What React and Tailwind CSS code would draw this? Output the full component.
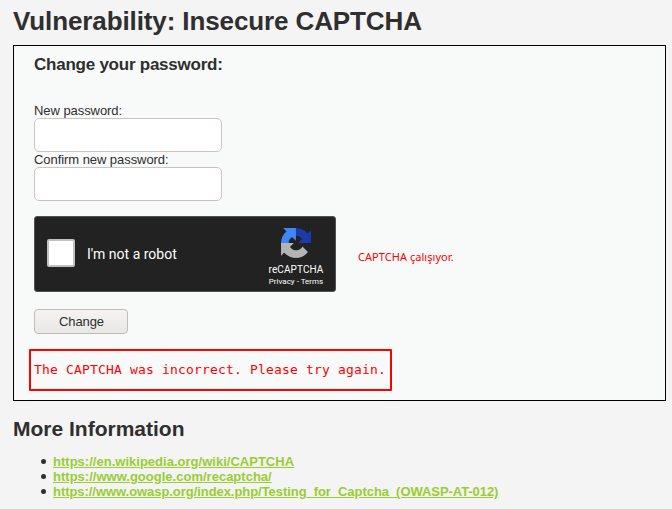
const links = [
  { href: 'https://en.wikipedia.org/wiki/CAPTCHA', tracking: 'tracking-[0.015px]' },
  { href: 'https://www.google.com/recaptcha/', tracking: 'tracking-[0.01px]' },
  {
    href: 'https://www.owasp.org/index.php/Testing_for_Captcha_(OWASP-AT-012)',
    tracking: 'tracking-[-0.055px]',
  },
];

function PasswordField({ label }) {
  return (
    <label className="block">
      <span className="block h-[15px] leading-[15px] tracking-[-0.06px]">{label}</span>
      <input
        type="password"
        className="block h-[34px] w-[188px] rounded-[5px] border border-[#cbc4bf] bg-white px-2 outline-none"
      />
    </label>
  );
}

function RecaptchaLogo() {
  return (
    <svg width="30" height="30" viewBox="0 0 64 64" className="block">
      <path
        d="M64 31.955l-.033-1.37V4.687l-7.16 7.16C50.948 4.674 42.033.093 32.05.093c-10.4 0-19.622 4.96-25.458 12.64l11.736 11.86a15.55 15.55 0 0 1 4.754-5.334c2.05-1.6 4.952-2.906 8.968-2.906.485 0 .86.057 1.135.163 4.976.393 9.288 3.14 11.828 7.124l-8.307 8.307L64 31.953"
        fill="#1c3aa9"
      />
      <path
        d="M31.862.094l-1.37.033H4.594l7.16 7.16C4.58 13.147 0 22.06 0 32.046c0 10.4 4.96 19.622 12.64 25.458L24.5 45.768a15.55 15.55 0 0 1-5.334-4.754c-1.6-2.05-2.906-4.952-2.906-8.968 0-.485.057-.86.163-1.135.393-4.976 3.14-9.288 7.124-11.828l8.307 8.307L31.86.095"
        fill="#4285f4"
      />
      <path
        d="M.001 32.045l.033 1.37v25.898l7.16-7.16c5.86 7.173 14.774 11.754 24.76 11.754 10.4 0 19.622-4.96 25.458-12.64l-11.736-11.86a15.55 15.55 0 0 1-4.754 5.334c-2.05 1.6-4.952 2.906-8.968 2.906-.485 0-.86-.057-1.135-.163-4.976-.393-9.288-3.14-11.828-7.124l8.307-8.307L0 32.045"
        fill="#b4b4b4"
      />
    </svg>
  );
}

function Recaptcha() {
  return (
    <div className="flex h-[76px] w-[302px] items-center rounded-[3px] border border-[#525252] bg-[#222] pl-3 font-[Roboto,sans-serif] text-white">
      <div className="mt-[-2px] h-7 w-7 shrink-0 rounded-[2px] border-2 border-[#c1c1c1] bg-white" />
      <span className="ml-3 w-[168px] shrink-0 text-[14px] leading-[17px]">I'm not a robot</span>
      <div className="ml-[1px] flex h-full w-[80px] shrink-0 flex-col items-center pt-[11px]">
        <RecaptchaLogo />
        <span className="mt-[7px] text-[10px] leading-[10px] tracking-[0.1px]">reCAPTCHA</span>
        <span className="mt-[2px] text-[8px] leading-[10px]">Privacy - Terms</span>
      </div>
    </div>
  );
}

export default function App() {
  return (
    <div className="h-[509px] w-[672px] overflow-hidden bg-[#f4f4f4] pl-[13px] font-['Liberation_Sans',Arial,sans-serif] text-[13px] leading-[15px] text-[#2f2f2f]">
      <h1 className="h-[45px] pt-[6px] text-[26px] leading-[30px] font-bold tracking-[-0.11px]">
        Vulnerability: Insecure CAPTCHA
      </h1>
      <div className="h-[356px] w-[653px] border border-black bg-[#f8fafa] pt-[9px] pl-5">
        <h3 className="text-[17px] leading-[19px] font-bold tracking-[-0.24px]">
          Change your password:
        </h3>
        <div className="mt-[29px]">
          <PasswordField label="New password:" />
          <PasswordField label="Confirm new password:" />
        </div>
        <div className="mt-[15px] flex items-center">
          <Recaptcha />
          <span className="mt-[5px] ml-[22px] font-['Noto_Sans',sans-serif] text-[11px] leading-[15px] tracking-[0.05px] text-[#ff0000]">
            CAPTCHA çalışıyor.
          </span>
        </div>
        <button className="mt-[17px] block h-[25px] w-[94px] rounded-[4px] border border-[#c3bcb6] bg-linear-to-b from-[#f5f4f3] to-[#e9e7e6] pl-[1px] text-[13px] tracking-[-0.1px]">
          Change
        </button>
        <pre className="mt-[15px] -ml-[5px] flex h-[42px] w-[363px] items-center rounded-[1px] border-2 border-[#ff0000] pb-[2px] pl-[3px] font-['DejaVu_Sans_Mono',monospace] text-[13px] leading-[15px] tracking-[0.174px] text-[#ff0000]">
          The CAPTCHA was incorrect. Please try again.
        </pre>
      </div>
      <h2 className="mt-4 text-[21px] leading-6 font-bold">More Information</h2>
      <ul className="mt-[13px] pl-7">
        {links.map(({ href, tracking }) => (
          <li key={href} className="flex h-[15px] items-center">
            <span className="mr-[7px] mb-[1px] size-[5px] rounded-full bg-[#2f2f2f]" />
            <a href={href} className={`font-bold text-[#9acd32] underline ${tracking}`}>
              {href}
            </a>
          </li>
        ))}
      </ul>
    </div>
  );
}
